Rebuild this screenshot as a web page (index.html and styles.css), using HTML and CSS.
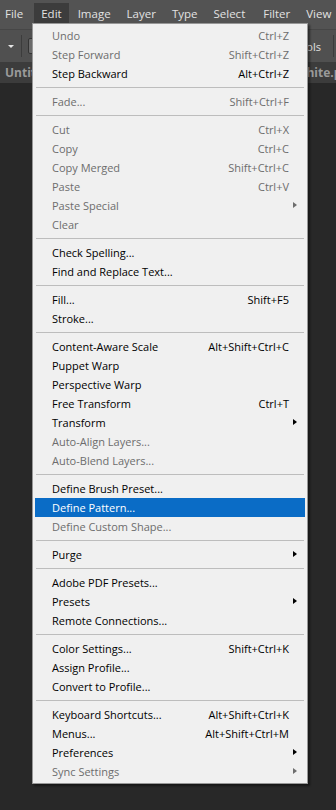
FILE: index.html
```html
<!DOCTYPE html>
<html lang="en">
<head>
    <meta charset="UTF-8">
    <meta name="viewport" content="width=device-width, initial-scale=1.0">
    <title>Edit Menu</title>
    <link rel="stylesheet" href="styles.css">
</head>
<body>
    <div class="app">
        <nav class="menubar">
            <span class="menubar-item">File</span>
            <span class="menubar-item active">Edit</span>
            <span class="menubar-item">Image</span>
            <span class="menubar-item">Layer</span>
            <span class="menubar-item">Type</span>
            <span class="menubar-item">Select</span>
            <span class="menubar-item">Filter</span>
            <span class="menubar-item">View</span>
        </nav>

        <div class="toolbar">
            <span class="tool-caret"></span>
            <span class="tool-sep"></span>
            <span class="tool-box"></span>
            <span class="tool-spacer"></span>
            <span class="tool-label">Tools</span>
            <span class="tool-sep right"></span>
        </div>

        <div class="tabbar">
            <span class="tab-title">Untitled-1</span>
            <span class="tab-title">white.png</span>
        </div>

        <div class="canvas"></div>

        <ul class="dropdown">
            <li class="item disabled"><span>Undo</span><span class="key">Ctrl+Z</span></li>
            <li class="item disabled"><span>Step Forward</span><span class="key">Shift+Ctrl+Z</span></li>
            <li class="item"><span>Step Backward</span><span class="key">Alt+Ctrl+Z</span></li>
            <li class="sep"></li>
            <li class="item disabled"><span>Fade...</span><span class="key">Shift+Ctrl+F</span></li>
            <li class="sep"></li>
            <li class="item disabled"><span>Cut</span><span class="key">Ctrl+X</span></li>
            <li class="item disabled"><span>Copy</span><span class="key">Ctrl+C</span></li>
            <li class="item disabled"><span>Copy Merged</span><span class="key">Shift+Ctrl+C</span></li>
            <li class="item disabled"><span>Paste</span><span class="key">Ctrl+V</span></li>
            <li class="item disabled sub"><span>Paste Special</span><span class="key"></span></li>
            <li class="item disabled"><span>Clear</span><span class="key"></span></li>
            <li class="sep"></li>
            <li class="item"><span>Check Spelling...</span><span class="key"></span></li>
            <li class="item"><span>Find and Replace Text...</span><span class="key"></span></li>
            <li class="sep"></li>
            <li class="item"><span>Fill...</span><span class="key">Shift+F5</span></li>
            <li class="item"><span>Stroke...</span><span class="key"></span></li>
            <li class="sep"></li>
            <li class="item"><span>Content-Aware Scale</span><span class="key">Alt+Shift+Ctrl+C</span></li>
            <li class="item"><span>Puppet Warp</span><span class="key"></span></li>
            <li class="item"><span>Perspective Warp</span><span class="key"></span></li>
            <li class="item"><span>Free Transform</span><span class="key">Ctrl+T</span></li>
            <li class="item sub"><span>Transform</span><span class="key"></span></li>
            <li class="item disabled"><span>Auto-Align Layers...</span><span class="key"></span></li>
            <li class="item disabled"><span>Auto-Blend Layers...</span><span class="key"></span></li>
            <li class="sep"></li>
            <li class="item"><span>Define Brush Preset...</span><span class="key"></span></li>
            <li class="item selected"><span>Define Pattern...</span><span class="key"></span></li>
            <li class="item disabled"><span>Define Custom Shape...</span><span class="key"></span></li>
            <li class="sep"></li>
            <li class="item sub"><span>Purge</span><span class="key"></span></li>
            <li class="sep"></li>
            <li class="item"><span>Adobe PDF Presets...</span><span class="key"></span></li>
            <li class="item sub"><span>Presets</span><span class="key"></span></li>
            <li class="item"><span>Remote Connections...</span><span class="key"></span></li>
            <li class="sep"></li>
            <li class="item"><span>Color Settings...</span><span class="key">Shift+Ctrl+K</span></li>
            <li class="item"><span>Assign Profile...</span><span class="key"></span></li>
            <li class="item"><span>Convert to Profile...</span><span class="key"></span></li>
            <li class="sep"></li>
            <li class="item"><span>Keyboard Shortcuts...</span><span class="key">Alt+Shift+Ctrl+K</span></li>
            <li class="item"><span>Menus...</span><span class="key">Alt+Shift+Ctrl+M</span></li>
            <li class="item sub"><span>Preferences</span><span class="key"></span></li>
            <li class="item disabled sub"><span>Sync Settings</span><span class="key"></span></li>
        </ul>
    </div>
</body>
</html>
```

FILE: styles.css
```css
* {
    margin: 0;
    padding: 0;
    box-sizing: border-box;
    font-family: 'Open Sans', 'Noto Sans', sans-serif;
}

body {
    background: #282828;
    width: 336px;
    height: 810px;
    overflow: hidden;
}

.app {
    position: relative;
    height: 810px;
    display: flex;
    flex-direction: column;
}

/* top menu bar */
.menubar {
    height: 29px;
    background: #535353;
    display: flex;
    align-items: center;
    padding-left: 0;
    white-space: nowrap;
    overflow: hidden;
}

.menubar-item {
    color: #e2e2e2;
    font-size: 11.5px;
    padding: 3px 7px 5px;
    margin-right: 2px;
}

.menubar-item:first-child {
    padding-left: 5px;
    margin-right: 4px;
}

.menubar-item:nth-child(6) {
    margin-right: 4px;
}

.menubar-item.active {
    background: #3c3c3c;
}

/* options bar */
.toolbar {
    height: 33px;
    background: #505050;
    border-top: 1px solid #464646;
    display: flex;
    align-items: center;
    padding-left: 8px;
}

.tool-caret {
    width: 0;
    height: 0;
    border-left: 3px solid transparent;
    border-right: 3px solid transparent;
    border-top: 3px solid #e6e6e6;
}

.tool-sep {
    width: 1px;
    height: 22px;
    background: #3c3c3c;
    margin-left: 7px;
}

.tool-box {
    width: 10px;
    height: 16px;
    margin-left: 6px;
    border: 1px solid #333;
    background: #6a6a6a;
    border-radius: 2px;
}

.tool-spacer {
    flex: 1;
}

.tool-label {
    color: #e0e0e0;
    font-size: 11px;
    margin-right: 12px;
}

.tool-sep.right {
    margin-left: 0;
    margin-right: 2px;
}

/* document tabs */
.tabbar {
    height: 21px;
    background: #3c3c3c;
    display: flex;
    align-items: center;
    justify-content: space-between;
    padding: 0 0 0 5px;
    overflow: hidden;
    white-space: nowrap;
}

.tab-title {
    color: #9a9a9a;
    font-size: 12px;
    font-weight: bold;
}

.tab-title + .tab-title {
    margin-right: -20px;
}

.canvas {
    flex: 1;
    background: #282828;
}

/* the open Edit menu */
.dropdown {
    position: absolute;
    left: 32px;
    top: 23px;
    width: 276px;
    list-style: none;
    background: #f0f0f0;
    border: 1px solid #979797;
    padding: 2px 2px;
    box-shadow: 2px 2px 2px rgba(0, 0, 0, 0.45);
}

.item {
    height: 19px;
    display: flex;
    align-items: center;
    padding: 0 16px 0 17px;
    font-size: 11px;
    color: #000;
    position: relative;
    white-space: nowrap;
}

.item .key {
    margin-left: auto;
}

.item.disabled {
    color: #6d6d6d;
}

.item.selected {
    background: #0a6cc6;
    color: #fff;
}

.item.sub::after {
    content: '';
    position: absolute;
    right: 8px;
    top: 6px;
    border-top: 3.5px solid transparent;
    border-bottom: 3.5px solid transparent;
    border-left: 4px solid #000;
}

.item.disabled.sub::after {
    border-left-color: #6d6d6d;
}

.sep {
    height: 1px;
    background: #bdbdbd;
    margin: 4px 1px;
}
```
